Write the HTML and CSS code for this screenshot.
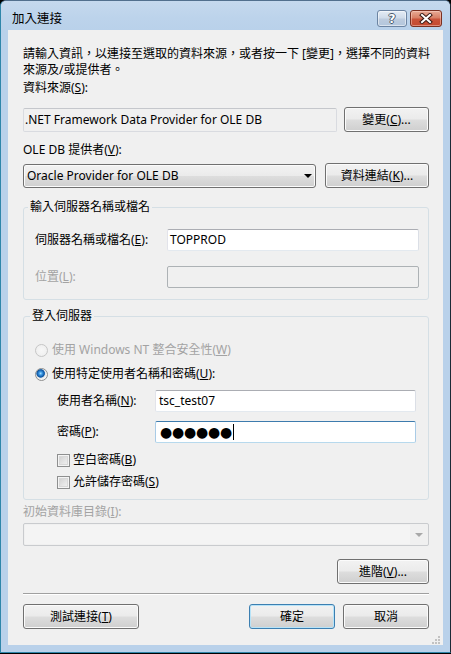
FILE: index.html
```html
<!DOCTYPE html>
<html>
<head>
<meta charset="utf-8">
<title>加入連接</title>
<link rel="stylesheet" href="styles.css">
</head>
<body>
<div class="window">
  <div class="titlebar">
    <span class="title">加入連接</span>
    <div class="caption-btns">
      <div class="cbtn help"><span class="q">?</span></div>
      <div class="cbtn close">
        <svg width="14" height="11" viewBox="0 0 14 11">
          <path d="M3 2 L11 9 M11 2 L3 9" stroke="#3a1a14" stroke-width="4" stroke-linecap="square" fill="none"/>
          <path d="M3 2 L11 9 M11 2 L3 9" stroke="#ffffff" stroke-width="2" stroke-linecap="square" fill="none"/>
        </svg>
      </div>
    </div>
  </div>
  <div class="client">
    <p class="intro">請輸入資訊，以連接至選取的資料來源，或者按一下 [變更]，選擇不同的資料<br>來源及/或提供者。</p>
    <div class="lbl lbl-src">資料來源(<u>S</u>):</div>
    <div class="row row-src">
      <div class="tb tb-ro">.NET Framework Data Provider for OLE DB</div>
      <div class="btn btn-change">變更(<u>C</u>)...</div>
    </div>
    <div class="lbl lbl-prov">OLE DB 提供者(<u>V</u>):</div>
    <div class="row row-prov">
      <div class="combo">Oracle Provider for OLE DB<span class="arrow"></span></div>
      <div class="btn btn-link">資料連結(<u>K</u>)...</div>
    </div>
    <fieldset class="gb gb-server">
      <legend>輸入伺服器名稱或檔名</legend>
      <div class="gb-body body-server">
        <div class="frow"><span class="flabel fl-server">伺服器名稱或檔名(<u>E</u>):</span><div class="tb tb-server">TOPPROD</div></div>
        <div class="frow frow-loc"><span class="flabel fl-server dis">位置(<u>L</u>):</span><div class="tb tb-dis"></div></div>
      </div>
    </fieldset>
    <fieldset class="gb gb-login">
      <legend>登入伺服器</legend>
      <div class="gb-body body-login">
        <div class="opt opt-nt dis"><span class="radio radio-dis"></span>使用 Windows NT 整合安全性(<u>W</u>)</div>
        <div class="opt opt-user"><span class="radio radio-on"></span>使用特定使用者名稱和密碼(<u>U</u>):</div>
        <div class="frow frow-user"><span class="flabel fl-login">使用者名稱(<u>N</u>):</span><div class="tb tb-login">tsc_test07</div></div>
        <div class="frow frow-pass"><span class="flabel fl-login">密碼(<u>P</u>):</span><div class="tb tb-login tb-focus"><span class="dots">●●●●●●</span><span class="caret"></span></div></div>
        <div class="opt chk chk-blank"><span class="checkbox"></span>空白密碼(<u>B</u>)</div>
        <div class="opt chk chk-save"><span class="checkbox"></span>允許儲存密碼(<u>S</u>)</div>
      </div>
    </fieldset>
    <div class="lbl lbl-cat dis">初始資料庫目錄(<u>I</u>):</div>
    <div class="combo-dis"><div class="combo-dis-inner"></div><span class="arrow arrow-dis"></span></div>
    <div class="row row-adv">
      <div class="btn btn-adv">進階(<u>V</u>)...</div>
    </div>
    <div class="sep"></div>
    <div class="row row-bottom">
      <div class="btn btn-test">測試連接(<u>T</u>)</div>
      <div class="btn-group">
        <div class="btn btn-ok btn-default">確定</div>
        <div class="btn btn-cancel">取消</div>
      </div>
    </div>
    <svg class="grip" width="9" height="9" viewBox="0 0 9 9">
      <rect x="6" y="0" width="2" height="2" fill="#c2c2c2"/>
      <rect x="3" y="3" width="2" height="2" fill="#c2c2c2"/>
      <rect x="6" y="3" width="2" height="2" fill="#c2c2c2"/>
      <rect x="0" y="6" width="2" height="2" fill="#c2c2c2"/>
      <rect x="3" y="6" width="2" height="2" fill="#c2c2c2"/>
      <rect x="6" y="6" width="2" height="2" fill="#c2c2c2"/>
    </svg>
  </div>
</div>
</body>
</html>
```
FILE: styles.css
```css
* { box-sizing: border-box; }
html, body { margin: 0; padding: 0; }
body {
  background: #000;
  width: 451px;
  height: 654px;
  overflow: hidden;
  font-family: "Noto Sans", "Noto Sans CJK TC", sans-serif;
  font-size: 12px;
  line-height: 16px;
  color: #000;
}
u { text-decoration: underline; text-underline-offset: 1px; }

.window {
  width: 451px;
  height: 653px;
  background: #b9d1ea;
  border: 1px solid #2f86aa;
  border-right-color: #1b2a36;
  border-top-color: #52708e;
  border-radius: 6px 6px 0 0;
  padding: 0 7px 7px 7px;
  display: flex;
  flex-direction: column;
}

.titlebar {
  margin: 0 -7px;
  height: 29px;
  flex: none;
  display: flex;
  align-items: flex-start;
  justify-content: space-between;
  padding: 9px 8px 0 11px;
  border-radius: 5px 5px 0 0;
  background: linear-gradient(to bottom, #c5d9ee 0%, #bcd3eb 60%, #b9d1ea 100%);
}
.title { margin-top: 1px; font-size: 12.5px; line-height: 16px; }
.caption-btns { display: flex; gap: 3px; }
.cbtn {
  height: 17px;
  border-radius: 3px;
  display: flex;
  align-items: center;
  justify-content: center;
}
.help {
  width: 30px;
  border: 1px solid #6c84a2;
  background: linear-gradient(to bottom, #e4ecf5 0%, #d0dcea 45%, #bccbde 55%, #b3c6dc 100%);
  box-shadow: inset 0 0 0 1px rgba(255,255,255,0.5);
}
.q {
  font-family: "DejaVu Sans", sans-serif;
  font-weight: bold;
  font-size: 12px;
  line-height: 12px;
  color: #fff;
  text-shadow: 1px 0 0 #4a5a6c, -1px 0 0 #4a5a6c, 0 1px 0 #4a5a6c, 0 -1px 0 #4a5a6c;
}
.close {
  width: 32px;
  border: 1px solid #7a3021;
  background: linear-gradient(to bottom, #e8ab96 0%, #d88066 45%, #c9533a 55%, #c44a30 100%);
  box-shadow: inset 0 0 0 1px rgba(255,220,210,0.45);
}
.close svg { display: block; }

.client {
  position: relative;
  flex: 1;
  background: #f0f0f0;
  padding: 0 14px 0 15px;
  display: flex;
  flex-direction: column;
}

.intro {
  margin: 0;
  padding-top: 16px;
  line-height: 16px;
  white-space: nowrap;
}
.lbl { line-height: 16px; white-space: nowrap; }
.lbl-src { margin-top: 2px; }
.lbl-prov { margin-top: 10px; }
.lbl-cat { margin-top: 4px; }
.dis { color: #a3a3a3; }

.row { display: flex; align-items: center; justify-content: space-between; }
.row-src { margin-top: 11px; height: 25px; }
.row-prov { margin-top: 5px; height: 25px; }

.tb {
  height: 22px;
  border: 1px solid #dbdfe6;
  border-top-color: #abadb3;
  border-bottom-color: #e3e9ef;
  border-left-color: #e2e3ea;
  border-radius: 2px;
  background: #fff;
  display: flex;
  align-items: center;
  padding-left: 2px;
  white-space: nowrap;
}
.tb-ro { width: 314px; height: 24px; background: #f0f0f0; border-color: #d9dbe0; border-top-color: #c5c7cc; padding-left: 1px; }
.tb-server { width: 252px; }
.tb-dis { width: 252px; background: #f0f0f0; border: 1px solid #adb2b5; }
.tb-login { width: 261px; padding-left: 3px; }
.tb-focus {
  border-color: #a9cbe6;
  border-top-color: #3d7bad;
  border-bottom-color: #b7d9ed;
  padding-left: 4px;
}
.dots {
  font-family: "DejaVu Sans", sans-serif;
  font-size: 14px;
  line-height: 16px;
  letter-spacing: -0.2px;
}
.caret { width: 1px; height: 16px; background: #000; margin-left: 1px; }

.btn {
  height: 25px;
  border: 1px solid #707070;
  border-radius: 3px;
  background: linear-gradient(to bottom, #f2f2f2 0%, #ebebeb 48%, #dddddd 52%, #cfcfcf 100%);
  box-shadow: inset 0 0 0 1px #fbfbfb;
  display: flex;
  align-items: center;
  justify-content: center;
  white-space: nowrap;
}
.btn-change { width: 85px; }
.btn-link { width: 104px; }
.btn-adv { width: 92px; }
.btn-test { width: 116px; }
.btn-ok { width: 86px; }
.btn-cancel { width: 86px; }
.btn-default {
  border-color: #3c7fb1;
  box-shadow: inset 0 0 0 1px #b7e3f8;
}

.combo {
  width: 293px;
  height: 24px;
  border: 1px solid #707070;
  border-radius: 3px;
  background: linear-gradient(to bottom, #f2f2f2 0%, #ebebeb 48%, #dddddd 52%, #cfcfcf 100%);
  box-shadow: inset 0 0 0 1px #fbfbfb;
  display: flex;
  align-items: center;
  padding: 0 3px 0 3px;
  white-space: nowrap;
}
.arrow {
  margin-left: auto;
  width: 0;
  height: 0;
  border-left: 4px solid transparent;
  border-right: 4px solid transparent;
  border-top: 4px solid #000;
}

.gb {
  margin: 0;
  padding: 0;
  min-width: 0;
  border: 1px solid #d5dfe5;
  border-radius: 3px;
}
.gb legend { padding: 0 2px; line-height: 16px; }
.gb-server { margin-top: 11px; }
.gb-server legend { margin-left: 4px; }
.gb-login { margin-top: 8px; }
.gb-login legend { margin-left: 6px; }
.gb-body { display: flex; flex-direction: column; }
.body-server { padding: 14px 8px 11px 11px; }
.body-login { padding: 18px 12px 9px 11px; }

.frow { display: flex; align-items: center; height: 22px; }
.flabel { white-space: nowrap; flex: none; }
.fl-server { width: 132px; }
.fl-login { width: 98px; margin-left: 22px; }
.frow-loc { margin-top: 15px; }
.frow-user { margin-top: 8px; }
.frow-pass { margin-top: 9px; }

.opt { display: flex; align-items: center; height: 16px; white-space: nowrap; }
.opt-user { margin-top: 8px; }
.radio {
  width: 13px;
  height: 13px;
  border-radius: 50%;
  margin-right: 4px;
  flex: none;
  border: 1px solid #8e8f8f;
  background: radial-gradient(circle at 50% 50%, #f6f6f6 0, #e6e6e6 4px, #d4d4d4 6px);
}
.radio-dis { border-color: #c6c6c6; background: radial-gradient(circle at 50% 50%, #f7f7f7 0, #efefef 6px); }
.radio-on {
  background: radial-gradient(circle at 42% 40%, #a6e0ff 0, #3a98e6 1.6px, #11569f 3.6px, #2a6fb5 4px, #e4e4e4 4.6px, #f4f4f4 6px);
}
.chk { margin-left: 22px; }
.chk-blank { margin-top: 9px; }
.chk-save { margin-top: 6px; }
.checkbox {
  width: 13px;
  height: 13px;
  flex: none;
  margin-right: 3px;
  border: 1px solid #8e8f8f;
  background: linear-gradient(135deg, #cbcbcb 0%, #e6e6e6 60%, #f4f4f4 100%);
  box-shadow: inset 0 0 0 1px #f4f4f4, inset 0 0 0 2px #d8d8d8;
}

.combo-dis {
  margin-top: 3px;
  height: 23px;
  border: 1px solid #c9cbce;
  border-radius: 2px;
  background: #f0f0f0;
  display: flex;
  align-items: center;
  padding: 1px 5px 1px 1px;
}
.combo-dis-inner { width: 385px; height: 19px; background: #f4f4f4; }
.arrow-dis { border-top-color: #a8a8a8; border-left-width: 4px; border-right-width: 4px; }

.row-adv { margin-top: 13px; justify-content: flex-end; height: 25px; }
.sep {
  margin-top: 9px;
  height: 2px;
  border-top: 1px solid #a0a0a0;
  border-bottom: 1px solid #ffffff;
}
.row-bottom { margin-top: 9px; height: 25px; }
.btn-group { display: flex; gap: 8px; }

.grip { position: absolute; right: 2px; bottom: 0px; }
```
